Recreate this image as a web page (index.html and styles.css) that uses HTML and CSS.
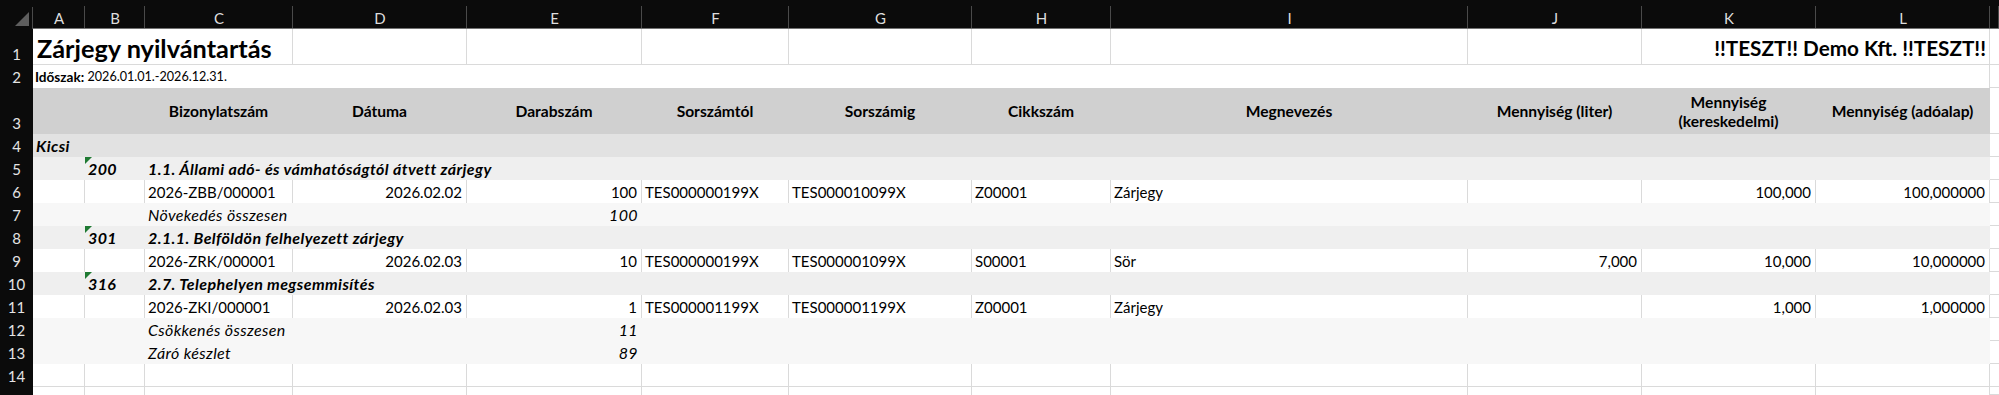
FILE: index.html
```html
<!DOCTYPE html>
<html lang="hu">
<head>
<meta charset="utf-8">
<title>Zárjegy nyilvántartás</title>
<link rel="stylesheet" href="styles.css">
</head>
<body>
<div class="sheet">
  <div class="row colhdr">
    <div class="corner"><span class="corner-tri"></span></div>
    <div class="ch">A</div><div class="ch">B</div><div class="ch">C</div><div class="ch">D</div><div class="ch">E</div><div class="ch">F</div><div class="ch">G</div><div class="ch">H</div><div class="ch">I</div><div class="ch">J</div><div class="ch">K</div><div class="ch">L</div><div class="ch"></div>
  </div>

  <div class="row r-title">
    <div class="rh">1</div>
    <div class="c g s-ac title">Zárjegy nyilvántartás</div>
    <div class="c g"></div><div class="c g"></div><div class="c g"></div><div class="c g"></div><div class="c g"></div><div class="c g"></div><div class="c g"></div>
    <div class="c g r s-kl company">!!TESZT!! Demo Kft. !!TESZT!!</div>
    <div class="c m"></div>
  </div>

  <div class="row">
    <div class="rh">2</div>
    <div class="c g s-al period"><b class="period-label">Időszak:</b>&nbsp;2026.01.01.-2026.12.31.</div>
    <div class="c m"></div>
  </div>

  <div class="row r-head fill-h">
    <div class="rh">3</div>
    <div class="c"></div>
    <div class="c"></div>
    <div class="c ctr">Bizonylatszám</div>
    <div class="c ctr">Dátuma</div>
    <div class="c ctr">Darabszám</div>
    <div class="c ctr">Sorszámtól</div>
    <div class="c ctr">Sorszámig</div>
    <div class="c ctr">Cikkszám</div>
    <div class="c ctr">Megnevezés</div>
    <div class="c ctr">Mennyiség (liter)</div>
    <div class="c ctr wrap">Mennyiség (kereskedelmi)</div>
    <div class="c ctr">Mennyiség (adóalap)</div>
    <div class="c m"></div>
  </div>

  <div class="row fill-1">
    <div class="rh">4</div>
    <div class="c s-al bi">Kicsi</div>
    <div class="c m"></div>
  </div>

  <div class="row fill-2">
    <div class="rh">5</div>
    <div class="c"></div>
    <div class="c bi"><span class="flag"></span>200</div>
    <div class="c s-cl bi">1.1. Állami adó- és vámhatóságtól átvett zárjegy</div>
    <div class="c m"></div>
  </div>

  <div class="row">
    <div class="rh">6</div>
    <div class="c g"></div>
    <div class="c g"></div>
    <div class="c g">2026-ZBB/000001</div>
    <div class="c g r">2026.02.02</div>
    <div class="c g r">100</div>
    <div class="c g">TES000000199X</div>
    <div class="c g">TES000010099X</div>
    <div class="c g">Z00001</div>
    <div class="c g">Zárjegy</div>
    <div class="c g"></div>
    <div class="c g r">100,000</div>
    <div class="c g r">100,000000</div>
    <div class="c m"></div>
  </div>

  <div class="row fill-3">
    <div class="rh">7</div>
    <div class="c s-ab"></div>
    <div class="c s-cd i">Növekedés összesen</div>
    <div class="c r i">100</div>
    <div class="c s-fl"></div>
    <div class="c m"></div>
  </div>

  <div class="row fill-2">
    <div class="rh">8</div>
    <div class="c"></div>
    <div class="c bi"><span class="flag"></span>301</div>
    <div class="c s-cl bi">2.1.1. Belföldön felhelyezett zárjegy</div>
    <div class="c m"></div>
  </div>

  <div class="row">
    <div class="rh">9</div>
    <div class="c g"></div>
    <div class="c g"></div>
    <div class="c g">2026-ZRK/000001</div>
    <div class="c g r">2026.02.03</div>
    <div class="c g r">10</div>
    <div class="c g">TES000000199X</div>
    <div class="c g">TES000001099X</div>
    <div class="c g">S00001</div>
    <div class="c g">Sör</div>
    <div class="c g r">7,000</div>
    <div class="c g r">10,000</div>
    <div class="c g r">10,000000</div>
    <div class="c m"></div>
  </div>

  <div class="row fill-2">
    <div class="rh">10</div>
    <div class="c"></div>
    <div class="c bi"><span class="flag"></span>316</div>
    <div class="c s-cl bi">2.7. Telephelyen megsemmisítés</div>
    <div class="c m"></div>
  </div>

  <div class="row">
    <div class="rh">11</div>
    <div class="c g"></div>
    <div class="c g"></div>
    <div class="c g">2026-ZKI/000001</div>
    <div class="c g r">2026.02.03</div>
    <div class="c g r">1</div>
    <div class="c g">TES000001199X</div>
    <div class="c g">TES000001199X</div>
    <div class="c g">Z00001</div>
    <div class="c g">Zárjegy</div>
    <div class="c g"></div>
    <div class="c g r">1,000</div>
    <div class="c g r">1,000000</div>
    <div class="c m"></div>
  </div>

  <div class="row fill-3">
    <div class="rh">12</div>
    <div class="c s-ab"></div>
    <div class="c s-cd i">Csökkenés összesen</div>
    <div class="c r i">11</div>
    <div class="c s-fl"></div>
    <div class="c m"></div>
  </div>

  <div class="row fill-3">
    <div class="rh">13</div>
    <div class="c s-ab"></div>
    <div class="c s-cd i">Záró készlet</div>
    <div class="c r i">89</div>
    <div class="c s-fl"></div>
    <div class="c m"></div>
  </div>

  <div class="row r-empty">
    <div class="rh">14</div>
    <div class="c g"></div><div class="c g"></div><div class="c g"></div><div class="c g"></div><div class="c g"></div><div class="c g"></div><div class="c g"></div><div class="c g"></div><div class="c g"></div><div class="c g"></div><div class="c g"></div><div class="c g"></div>
    <div class="c m"></div>
  </div>

  <div class="row r-last">
    <div class="rh"></div>
    <div class="c g"></div><div class="c g"></div><div class="c g"></div><div class="c g"></div><div class="c g"></div><div class="c g"></div><div class="c g"></div><div class="c g"></div><div class="c g"></div><div class="c g"></div><div class="c g"></div><div class="c g"></div>
    <div class="c m"></div>
  </div>
</div>
</body>
</html>
```

FILE: styles.css
```css
* { box-sizing: border-box; margin: 0; padding: 0; }
html, body { background: #ffffff; }
body {
  font-family: Lato, "Open Sans", sans-serif;
  font-size: 15px;
  color: #000;
  overflow: hidden;
}
.sheet { display: flex; flex-direction: column; width: 1999px; }
.row {
  display: grid;
  grid-template-columns: 33px 52px 60px 148px 174px 175px 147px 183px 139px 357px 174px 174px 174px 9px;
  height: 23px;
  flex: none;
}
.colhdr { height: 29px; }
.r-title { height: 36px; }
.r-head { height: 46px; }
.r-last { height: 8px; }

/* column header */
.corner {
  background: #0b0b0b;
  display: flex;
  justify-content: flex-end;
  align-items: flex-end;
  padding: 0 4px 3px 0;
  background-image: linear-gradient(#4a4a4a, #4a4a4a);
  background-size: 1px 22px;
  background-position: right bottom;
  background-repeat: no-repeat;
}
.corner-tri {
  width: 0; height: 0;
  border-bottom: 14px solid #5e5e5e;
  border-left: 14px solid transparent;
}
.ch {
  background: #0b0b0b;
  color: #dedede;
  display: flex;
  justify-content: center;
  align-items: center;
  padding-top: 7px;
  font-size: 15px;
  border-bottom: 1px solid #727272;
  background-image: linear-gradient(#4a4a4a, #4a4a4a);
  background-size: 1px 22px;
  background-position: right bottom;
  background-repeat: no-repeat;
}

/* row header */
.rh {
  background: #0b0b0b;
  color: #e4e4e4;
  display: flex;
  justify-content: center;
  align-items: flex-end;
  padding-bottom: 2px;
  font-size: 15px;
  line-height: 18px;
}

/* cells */
.c {
  display: flex;
  align-items: center;
  padding: 0 4px 0 3px;
  white-space: nowrap;
  min-width: 0;
  line-height: 18px;
  position: relative;
}
.g { border-right: 1px solid #dadada; }
.m { border-bottom: 1px solid #dadada; background: #fff !important; }
.r-empty .c { border-bottom: 1px solid #dadada; }
.r { justify-content: flex-end; }
.ctr { justify-content: center; text-align: center; font-weight: 700; font-size: 15.6px; }
.wrap { white-space: normal; line-height: 19px; padding-top: 2px; }
.i { font-style: italic; font-size: 16px; letter-spacing: 0.35px; }
.bi { font-weight: 700; font-style: italic; font-size: 16px; letter-spacing: 0.4px; }

.s-ac { grid-column: 2 / 5; }
.s-al { grid-column: 2 / 14; }
.s-kl { grid-column: 12 / 14; }
.s-cl { grid-column: 4 / 14; }
.s-cd { grid-column: 4 / 6; }
.s-ab { grid-column: 2 / 4; }
.s-fl { grid-column: 7 / 14; }

.r-title .c { border-bottom: 1px solid #dadada; }
.title { font-size: 25.3px; font-weight: 700; padding-top: 2px; padding-left: 4px; }
.company { font-size: 20.7px; font-weight: 700; padding-top: 3px; padding-right: 3px; }
.period { font-size: 12.6px; padding-left: 2px; }
.period-label { font-size: 13.6px; }

.fill-h > .c { background: #d0d0d0; }
.fill-1 > .c { background: #e2e2e2; }
.fill-2 > .c { background: #efefef; }
.fill-3 > .c { background: #f7f7f7; }

.flag {
  position: absolute;
  top: 0;
  left: 0;
  width: 0; height: 0;
  border-top: 7px solid #1f7a33;
  border-right: 7px solid transparent;
}
```
